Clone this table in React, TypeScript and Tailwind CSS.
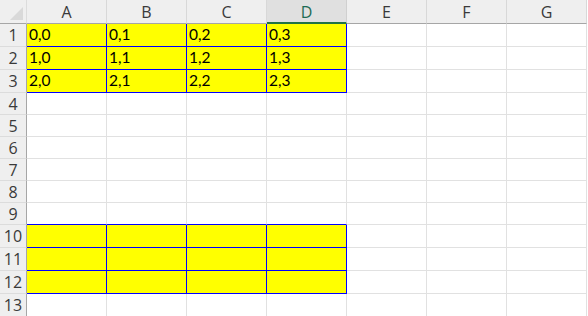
const COLS = ["A", "B", "C", "D", "E", "F", "G"];
const SELECTED = "D";

// row heights including the bottom gridline
const ROWS = [1, 2, 3, 4, 5, 6, 7, 8, 9, 10, 11, 12, 13].map((n) => ({
  n,
  h: n <= 3 || n >= 10 ? "h-[23px]" : "h-[22px]",
}));

function isYellow(r: number, c: number) {
  return c < 4 && (r <= 3 || (r >= 10 && r <= 12));
}

function cellText(r: number, c: number) {
  if (r <= 3 && c < 4) return `${r - 1},${c}`;
  return "";
}

function Corner() {
  return (
    <div className="relative h-[24px] w-[27px] border-r border-b border-r-[#dcdcdc] border-b-[#a6a6a6] bg-[#efefef]">
      <svg className="absolute left-0 top-0" width="26" height="23" viewBox="0 0 26 23">
        <polygon points="23,7 23,20 10,20" fill="#d9d9d9" />
      </svg>
    </div>
  );
}

function ColHeader({ label }: { label: string }) {
  const sel = label === SELECTED;
  return (
    <div
      className={
        sel
          ? "flex h-[24px] w-[80px] items-center justify-center border-r border-b-2 border-r-[#d0d0d0] border-b-[#217346] bg-[#e0e0e0] pt-[1px] text-[16px] text-[#1d6b55]"
          : "flex h-[24px] w-[80px] items-center justify-center border-r border-b border-r-[#d8d8d8] border-b-[#a6a6a6] bg-[#efefef] text-[16px] text-[#3a3a3a]"
      }
    >
      {label}
    </div>
  );
}

function RowHeader({ n, h }: { n: number; h: string }) {
  return (
    <div
      className={`flex ${h} w-[27px] items-center justify-center border-r border-b border-r-[#a6a6a6] border-b-[#dcdcdc] bg-[#efefef] text-[16px] text-[#3a3a3a]`}
    >
      {n}
    </div>
  );
}

function Cell({ r, c, h }: { r: number; c: number; h: string }) {
  const y = isYellow(r, c);
  const blueBottom = y || (r === 9 && c < 4);
  const blueRight = y;
  return (
    <div
      className={[
        "flex w-[80px] items-end border-r border-b pb-[2px] pl-[2px] text-[15.5px] leading-[19px] text-black",
        h,
        y ? "bg-[#ffff00]" : "bg-white",
        blueBottom ? "border-b-[#0000ff]" : "border-b-[#e1e1e1]",
        blueRight ? "border-r-[#0000ff]" : "border-r-[#e1e1e1]",
      ].join(" ")}
      style={{ fontFamily: "Lato, 'Open Sans', sans-serif" }}
    >
      {cellText(r, c)}
    </div>
  );
}

export default function App() {
  return (
    <div
      className="h-[316px] w-[588px] overflow-hidden bg-white"
      style={{ fontFamily: "'Open Sans', 'Noto Sans', sans-serif" }}
    >
      <div className="flex">
        <Corner />
        {COLS.map((c) => (
          <ColHeader key={c} label={c} />
        ))}
      </div>
      {ROWS.map(({ n, h }) => (
        <div key={n} className="flex">
          <RowHeader n={n} h={h} />
          {COLS.map((_, ci) => (
            <Cell key={ci} r={n} c={ci} h={h} />
          ))}
        </div>
      ))}
    </div>
  );
}
